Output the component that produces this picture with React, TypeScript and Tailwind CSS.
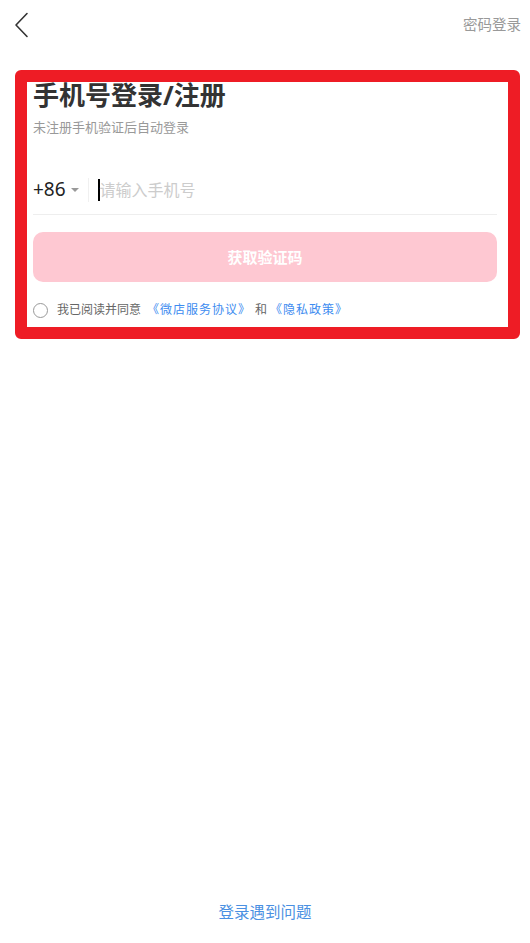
export default function App() {
  return (
    <div
      className="relative flex h-[943px] w-full flex-col bg-white text-[#333]"
      style={{ fontFamily: '"Noto Sans", "Noto Sans CJK SC", sans-serif' }}
    >
      {/* Header */}
      <header className="flex h-[50px] items-center justify-between pl-[14px] pr-[9px]">
        <svg width="16" height="26" viewBox="0 0 16 26" fill="none">
          <path d="M13 1.5 L2 13 L13 24.5" stroke="#333" strokeWidth="1.6" strokeLinecap="round" strokeLinejoin="round" />
        </svg>
        <span className="text-[14.5px] text-[#999]">密码登录</span>
      </header>

      {/* Login form */}
      <main className="flex flex-col pl-[33px] pr-[33px]">
        <h1 className="mt-[27px] text-[26px] font-bold leading-[36px] text-[#333]">手机号登录/注册</h1>
        <p className="mt-[5px] text-[13px] leading-[18px] text-[#999]">未注册手机验证后自动登录</p>

        <div className="mt-[29px] flex h-[50px] items-center border-b border-[#eee]">
          <span className="text-[19px] text-[#222]">+86</span>
          <span className="ml-[5px] h-0 w-0 border-x-[4px] border-t-[4px] border-x-transparent border-t-[#999]" />
          <span className="ml-[9px] h-[24px] w-px bg-[#f0f0f0]" />
          <span className="ml-[9px] h-[22px] w-[2px] bg-black" />
          <span className="text-[16px] text-[#ccc]">请输入手机号</span>
        </div>

        <button className="mt-[17px] h-[50px] w-full rounded-[10px] bg-[#fec8d2] text-[15px] font-bold text-white">
          获取验证码
        </button>

        <div className="mt-[20px] flex items-center text-[12px] leading-[16px]">
          <span className="h-[15px] w-[15px] rounded-full border border-[#999]" />
          <span className="ml-[9px] text-[#666]">我已阅读并同意</span>
          <span className="ml-[6px] tracking-[1px] text-[#3d8cf0]">《微店服务协议》</span>
          <span className="ml-[4px] text-[#666]">和</span>
          <span className="ml-[3px] tracking-[1px] text-[#3d8cf0]">《隐私政策》</span>
        </div>
      </main>

      {/* Footer link */}
      <div className="mt-auto mb-[19px] flex justify-center">
        <span className="text-[15.5px] text-[#4a90e2]">登录遇到问题</span>
      </div>

      {/* Red highlight frame */}
      <div className="pointer-events-none absolute left-[15px] top-[70px] h-[269px] w-[505px] rounded-[6px] border-[12px] border-[#ee1c25]" />
    </div>
  );
}
